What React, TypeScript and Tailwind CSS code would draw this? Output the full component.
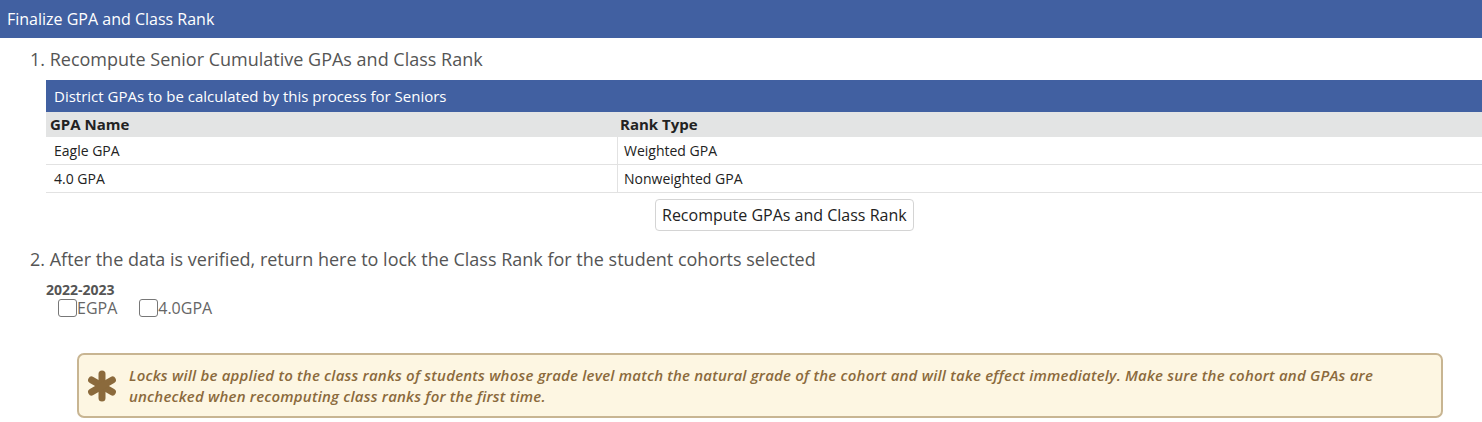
import React from "react";

const rows = [
  { name: "Eagle GPA", rank: "Weighted GPA" },
  { name: "4.0 GPA", rank: "Nonweighted GPA" },
];

function Asterisk() {
  return (
    <svg width="32" height="32" viewBox="0 0 32 32" className="shrink-0">
      <g stroke="#8b6a3c" strokeWidth="7" strokeLinecap="round">
        <line x1="16" y1="4" x2="16" y2="28" />
        <line x1="5.6" y1="10" x2="26.4" y2="22" />
        <line x1="5.6" y1="22" x2="26.4" y2="10" />
      </g>
    </svg>
  );
}

export default function App() {
  return (
    <div className="w-[1482px] h-[422px] bg-white overflow-hidden font-['Open_Sans',sans-serif] text-[#444]">
      <div className="h-[38px] bg-[#4160a1] flex items-center px-[7px] text-white text-[16px]">
        Finalize GPA and Class Rank
      </div>

      <div className="pl-[30px] pt-[9px] text-[18px] text-[#555] leading-[24px]">
        1. Recompute Senior Cumulative GPAs and Class Rank
      </div>

      <div className="ml-[46px] mt-[9px]">
        <div className="h-[32px] bg-[#4160a1] text-white text-[15px] flex items-center px-[8px]">
          District GPAs to be calculated by this process for Seniors
        </div>
        <div className="grid grid-cols-[572px_1fr] text-[14px] text-[#222]">
          <div className="h-[25px] bg-[#e3e4e4] flex items-center pl-[4px] font-bold text-[15px]">GPA Name</div>
          <div className="h-[25px] bg-[#e3e4e4] flex items-center pl-[2px] font-bold text-[15px]">Rank Type</div>
          {rows.map((r) => (
            <React.Fragment key={r.name}>
              <div className="h-[28px] flex items-center pl-[8px] border-b border-r border-[#e2e2e2]">
                {r.name}
              </div>
              <div className="h-[28px] flex items-center pl-[6px] border-b border-[#e2e2e2]">
                {r.rank}
              </div>
            </React.Fragment>
          ))}
        </div>
        <div className="flex pl-[609px] pt-[6px]">
          <button className="h-[32px] px-[6px] border border-[#d4d4d4] rounded-[4px] bg-white text-[16px] text-[#222]">
            Recompute GPAs and Class Rank
          </button>
        </div>
      </div>

      <div className="pl-[30px] pt-[16px] text-[18px] text-[#555] leading-[24px]">
        2. After the data is verified, return here to lock the Class Rank for the student cohorts selected
      </div>

      <div className="pl-[46px] pt-[11px] text-[16px]">
        <div className="font-bold text-[14px] text-[#555] leading-[16px]">2022-2023</div>
        <div className="flex items-center gap-[22px] pl-[12px] text-[#666] leading-[20px]">
          <label className="flex items-center">
            <span className="w-[19px] h-[18px] border border-[#777] rounded-[3px] inline-block" />
            <span>EGPA</span>
          </label>
          <label className="flex items-center">
            <span className="w-[19px] h-[18px] border border-[#777] rounded-[3px] inline-block" />
            <span>4.0GPA</span>
          </label>
        </div>
      </div>

      <div className="ml-[77px] mt-[35px] w-[1366px] h-[65px] bg-[#fdf6e2] border-2 border-[#c8b592] rounded-[7px] flex items-center pl-[7px] pr-[20px] gap-[11px]">
        <Asterisk />
        <div className="italic text-[15px] tracking-[0.2px] text-[#8b6a3c] leading-[21px] font-semibold">
          Locks will be applied to the class ranks of students whose grade level match the natural grade of the cohort and will take effect immediately. Make sure the cohort and GPAs are unchecked when recomputing class ranks for the first time.
        </div>
      </div>
    </div>
  );
}
